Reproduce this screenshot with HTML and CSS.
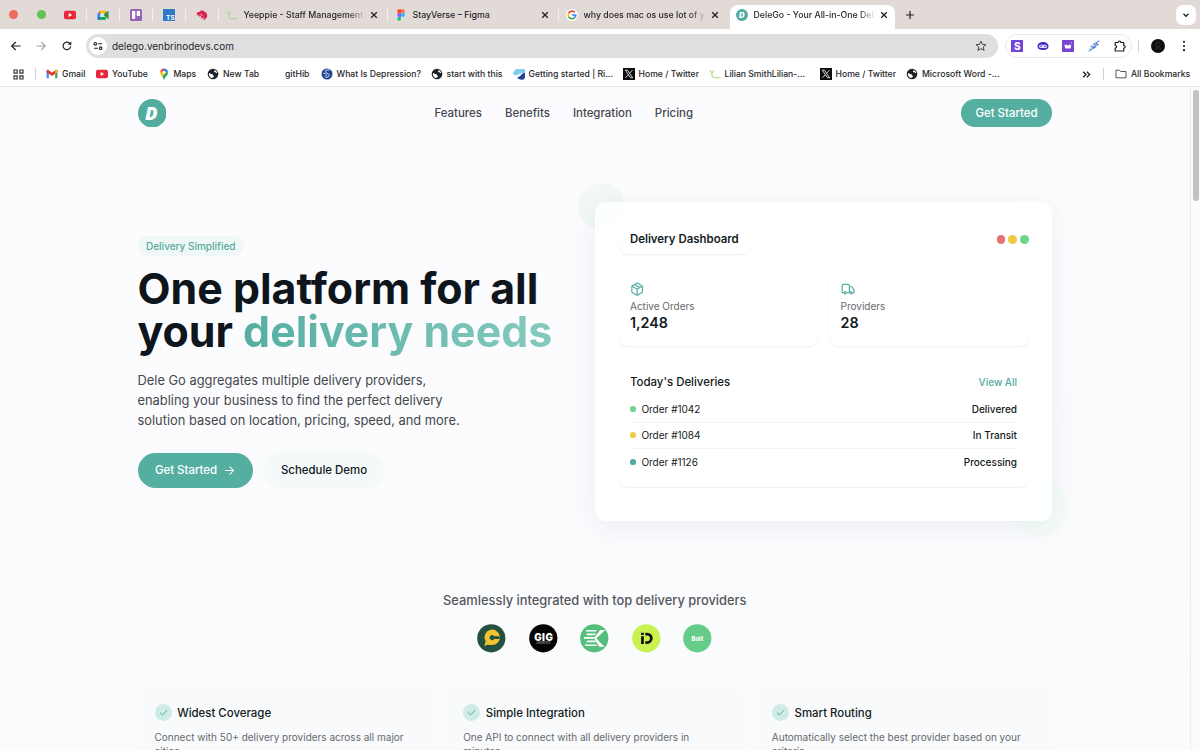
FILE: index.html
```
<!DOCTYPE html>
<html lang="en">
<head>
    <meta charset="UTF-8">
    <meta name="viewport" content="width=device-width, initial-scale=1.0">
    <title>DeleGo - Your All-in-One Delivery Platform</title>
    <link rel="stylesheet" href="styles.css">
</head>
<body>
    <!-- shared icons -->
    <svg class="defs" width="0" height="0">
        <symbol id="close" viewBox="0 0 8 8"><path d="M1.200 1.200l5.600 5.600M6.800 1.200L1.200 6.800" stroke="#222" stroke-width="1.300" fill="none"/></symbol>
        <symbol id="youtube" viewBox="0 0 12 12"><rect y="1.700" width="12" height="8.600" rx="2" fill="#e8283a"/><path d="M4.700 4v4l3.500-2z" fill="#fff"/></symbol>
        <symbol id="globe" viewBox="0 0 12 12"><circle cx="6" cy="6" r="5.300" fill="#202124"/><path d="M1.800 5.200c1.500-.3 2 .9 3.400 1 .9.1.6 1.200 1.500 1.500.6.3.3 1.300-.5 1.500-.6.2-.8.900-1.200.900C3 9.600 1.700 7.800 1.800 5.200zM6 2c.6 0 1.500-.2 1.700.2.300.6-1 .8-.7 1.500.3.600 1.500.2 1.800 1 .2.600 1 .4 1.400.3-.1-1.800-2-3.600-4.200-3z" fill="#fff"/></symbol>
        <symbol id="x-logo" viewBox="0 0 12 12"><rect width="12" height="12" fill="#0c0c0c"/><path d="M2.300 2.200h2.200l5.200 7.600H7.500z" fill="none" stroke="#fff" stroke-width=".8"/><path d="M9.400 2.200L6.500 5.400M5.300 6.700L2.500 9.800" stroke="#fff" stroke-width=".8"/></symbol>
        <symbol id="sprout" viewBox="0 0 12 12"><path d="M1 2l1.500 2.800M5 2.500L3 5.200c-.3 2 .3 4 2 4.600h6.500" stroke="#a5d98a" stroke-width="1.100" fill="none"/></symbol>
        <symbol id="check" viewBox="0 0 17 17"><circle cx="8.500" cy="8.500" r="8.500" fill="#cfebe5"/><path d="M5.200 8.700l2.300 2.200 4.300-4.500" stroke="#52ad9f" stroke-width="1" fill="none" stroke-linecap="round" stroke-linejoin="round"/></symbol>
    </svg>

    <div class="browser">
        <div class="tabs">
            <div class="lights"><i class="red"></i><i class="green"></i></div>
            <div class="pinned"><svg class="ico" viewBox="0 0 12 12"><use href="#youtube"/></svg></div>
            <div class="pinned"><svg class="ico" viewBox="0 0 12 12"><path d="M.5 4.500L3.500 1.500V4.500z" fill="#e94235"/><path d="M3.500 1.500h5.300v3H3.500z" fill="#fbbc04"/><path d="M.5 4.500h3v4h-3z" fill="#2684fc"/><path d="M.5 8.300h3v2.500H1.500a1 1 0 0 1-1-1z" fill="#0066da"/><path d="M3.500 8h5.300v2.800H3.500z" fill="#00ac47"/><path d="M3.500 4.500h3.300v3.500H3.500z" fill="#dfe8f5"/><path d="M6.500 6l2.300-2.500 2.700-1.800v8.600L8.800 8z" fill="#2d8f46"/></svg></div>
            <div class="pinned"><svg class="ico" viewBox="0 0 12 12"><rect width="12" height="12" rx="1.500" fill="#9564b5"/><rect x="2" y="2" width="3.200" height="7.800" fill="#fff"/><rect x="6.800" y="2" width="3.200" height="5" fill="#fff"/></svg></div>
            <div class="pinned"><svg class="ico" viewBox="0 0 12 12"><rect width="12" height="12" rx=".5" fill="#3178c6"/><text x="3.100" y="10.500" class="ts">TS</text></svg></div>
            <div class="pinned"><svg class="ico" viewBox="0 0 12 12"><path d="M5.200 1.200l1 .9 1.100-1 .4 1.100c2.300.5 3.800 2.500 3.500 4.900-.3 2.400-2.200 3.900-4.900 4 1.400-.7 2-1.700 1.700-2.900-.9 1.200-2.200 1.500-3.300 1l1.200-1c-.7-.1-1.200-.5-1.300-1.200L3.200 7.800 3 6.400 1 6.200.8 4.500C.9 3.200 2.500 2.900 3.500 3z" fill="#d9234b"/><path d="M3.800 5.800c1.200-.6 2.600 0 3.200 1.400" stroke="#e2dad7" stroke-width=".8" fill="none"/></svg></div>
            <div class="tab tab-yeeppie"><svg class="ico"><use href="#sprout"/></svg><span class="tab-title fade">Yeeppie - Staff Management</span><svg class="close"><use href="#close"/></svg></div>
            <div class="tab tab-figma"><svg class="ico" viewBox="0 0 12 12"><path d="M4 .3h2v3.800H4a1.900 1.900 0 0 1 0-3.800z" fill="#f24e1e"/><path d="M6 .3h2a1.900 1.900 0 0 1 0 3.800H6z" fill="#ff7262"/><path d="M4 4.100h2v3.800H4a1.900 1.900 0 0 1 0-3.800z" fill="#a259ff"/><circle cx="8" cy="6" r="1.900" fill="#1abcfe"/><path d="M4 7.900h2v1.900a1.900 1.900 0 1 1-2-1.900z" fill="#0acf83"/></svg><span class="tab-title">StayVerse – Figma</span><svg class="close"><use href="#close"/></svg></div>
            <div class="tab tab-google"><svg class="ico" viewBox="0 0 12 12"><circle cx="6" cy="6" r="6" fill="#fff"/><g fill="none" stroke-width="1.700"><path d="M2.700 4.100A3.800 3.800 0 0 1 8.900 3.400" stroke="#ea4335"/><path d="M2.700 4.100a3.800 3.800 0 0 0 0 3.800" stroke="#fbbc05"/><path d="M2.700 7.900a3.800 3.800 0 0 0 5.900.7" stroke="#34a853"/><path d="M8.600 8.600A3.700 3.700 0 0 0 9.800 6H6" stroke="#4285f4"/></g></svg><span class="tab-title fade">why does mac os use lot of yo</span><svg class="close"><use href="#close"/></svg></div>
            <div class="tab active"><svg class="ico" viewBox="0 0 12 12"><circle cx="6" cy="6" r="6" fill="#52ad9f"/><text x="3.100" y="8.700" class="mini-d">D</text></svg><span class="tab-title fade">DeleGo - Your All-in-One Deli</span><svg class="close"><use href="#close"/></svg></div>
            <svg class="plus" viewBox="0 0 10 10"><path d="M5 1v8M1 5h8" stroke="#222" stroke-width="1.200"/></svg>
            <div class="tab-search"><svg width="8" height="8" viewBox="0 0 8 8"><path d="M1.500 2.800L4 5.300l2.500-2.500" stroke="#222" stroke-width="1.300" fill="none"/></svg></div>
        </div>

        <div class="toolbar">
            <svg class="nav-ico" viewBox="0 0 12 12"><path d="M10.500 6H2M5.700 2L1.700 6l4 4" stroke="#222" stroke-width="1.200" fill="none"/></svg>
            <svg class="nav-ico" viewBox="0 0 12 12"><path d="M1.500 6H10M6.300 2l4 4-4 4" stroke="#a3a3a3" stroke-width="1.100" fill="none"/></svg>
            <svg class="nav-ico" viewBox="0 0 12 12"><path d="M9.700 6.300A3.800 3.800 0 1 1 8.600 3.200L9.800 4.400" stroke="#222" stroke-width="1.200" fill="none"/><path d="M10.300 1.600v3.200H7.100z" fill="#222"/></svg>
            <div class="omnibox">
                <div class="site-info"><svg width="10" height="10" viewBox="0 0 10 10" fill="none" stroke="#222" stroke-width="1.100"><circle cx="2.300" cy="2.800" r="1.300"/><path d="M5 2.800h4M1 7.200h4"/><circle cx="7.700" cy="7.200" r="1.300"/></svg></div>
                <span class="url">delego.venbrinodevs.com</span>
                <svg class="star" viewBox="0 0 12 12"><path d="M6 1.200l1.400 3.200 3.500.3-2.650 2.300.8 3.400L6 8.600 2.950 10.400l.8-3.400L1.100 4.700l3.500-.3z" stroke="#444" fill="none"/></svg>
            </div>
            <div class="extensions">
                <svg viewBox="0 0 12 12"><rect width="12" height="12" rx=".5" fill="#7345d6"/><text x="3" y="9.800" class="ext-s">S</text></svg>
                <svg viewBox="0 0 12 12"><path d="M.5 6.500C.5 3.600 3 2 6 2s5.500 1.600 5.500 4.500C11.500 9 9 10 6 10S.5 9 .5 6.500z" fill="#4a2ac0"/><rect x="2" y="4.800" width="8" height="3.300" rx="1.600" fill="#e2dcff"/><circle cx="4" cy="6.300" r=".8" fill="#4a2ac0"/><circle cx="8" cy="6.300" r=".8" fill="#4a2ac0"/></svg>
                <svg viewBox="0 0 12 12"><rect width="12" height="12" rx=".5" fill="#7a43d1"/><path d="M2.300 4.200l1 4.300h5.200l1-4.300L8 5.500 7.300 4.200 6 6 4.700 4.200 4 5.500z" fill="#fff"/><path d="M9 2.200l.8 1" stroke="#fff" stroke-width=".8"/></svg>
                <svg viewBox="0 0 12 12"><path d="M11.200.8L6.500 4.300h4L4.500 7.200H7L.8 11.200" stroke="#3c6fc9" stroke-width="1.100" fill="none" stroke-dasharray="2 .5"/><path d="M7.500 2.500L2.500 6.500h3L1 9" stroke="#5a8be0" stroke-width=".8" fill="none" stroke-dasharray="1.500 .6"/></svg>
                <svg viewBox="0 0 12 12"><path d="M1.200 2.500h3c0-2 2.600-2 2.600 0h2.900v3c2 0 2 2.500 0 2.500v3H1.200V8c1.900 0 1.900-2.500 0-2.500z" stroke="#222" stroke-width="1.200" fill="none" stroke-linejoin="round"/></svg>
            </div>
            <i class="divider"></i>
            <svg class="avatar" viewBox="0 0 14 14"><circle cx="7" cy="7" r="7" fill="#0e0e10"/><path d="M5 4.500c.5-2 3.500-2 4 0v2C8.500 8 5.500 8 5 6.500zM4 10c1-1.500 5-1.500 6 0" fill="none" stroke="#46464b" stroke-width=".8" stroke-dasharray="1 .6"/></svg>
            <svg class="menu" viewBox="0 0 4 12"><g fill="#222"><circle cx="2" cy="1.800" r="1.100"/><circle cx="2" cy="6" r="1.100"/><circle cx="2" cy="10.200" r="1.100"/></g></svg>
        </div>

        <div class="bookmarks">
            <svg class="apps" viewBox="0 0 12 12" fill="none" stroke="#333" stroke-width="1.300"><path d="M1.100 1.100h3.400v3.400H1.100zM7.500 1.100h3.400v3.400H7.500zM1.100 7.500h3.400v3.400H1.100zM7.500 7.500h3.400v3.400H7.500z"/></svg>
            <i class="divider"></i>
            <div class="bookmark-list">
                <div class="bookmark"><svg viewBox="0 0 12 12"><path d="M.6 2.500h2.200v7.700H1.300a.7.700 0 0 1-.7-.7z" fill="#4285f4"/><path d="M9.200 2.500h2.200v7a.7.700 0 0 1-.7.700H9.200z" fill="#34a853"/><path d="M.6 3c0-1.200 1.300-1.500 2.200-.8L6 4.700l3.200-2.500c.9-.7 2.200-.4 2.200.8v1.200L6 8 .6 4.200z" fill="#e03c31"/><path d="M9.200 2.200c.9-.7 2.200-.4 2.200.8v1.200L9.200 5.800z" fill="#fbbc04"/></svg>Gmail</div>
                <div class="bookmark"><svg><use href="#youtube"/></svg>YouTube</div>
                <div class="bookmark"><svg viewBox="0 0 12 12"><path d="M2.200 4.500A3.900 3.900 0 0 1 6 .4v4z" fill="#ea4335"/><path d="M6 .4a4 4 0 0 1 4 4H6z" fill="#4285f4"/><path d="M10 4.400C10 7.400 7.400 8 6 12L4.300 8.200 8.300 4z" fill="#34a853"/><path d="M2.200 4.500c0 1.500 1 2.500 2.100 3.900L6.500 5 4 3z" fill="#fbbc04"/><circle cx="6" cy="4.400" r="1.400" fill="#fff"/></svg>Maps</div>
                <div class="bookmark"><svg><use href="#globe"/></svg>New Tab</div>
                <div class="bookmark"><svg></svg>gitHib</div>
                <div class="bookmark"><svg viewBox="0 0 12 12"><circle cx="6" cy="6" r="5.500" fill="#20418f"/><path d="M8.500 2.200C5 1.300 3.500 3 5 4.500s4 1.500 3.200 3.300S5 9.500 3.500 8.700M2 5.500c2-1 4 1 3 2.500" stroke="#dbe6fb" fill="none"/></svg>What Is Depression?</div>
                <div class="bookmark"><svg><use href="#globe"/></svg>start with this</div>
                <div class="bookmark"><svg viewBox="0 0 12 12"><path d="M3 1h9v3.500C7 4.500 5.500 7.500 2.500 7.500.8 7.500 0 6 .3 4.500z" fill="#7fcdf0"/><path d="M12 4.500V9a3 3 0 0 1-3 2.700C6.500 11.700 5 10.700 4 9.300 7.500 9.500 7.500 5.800 12 4.500z" fill="#26409a"/></svg>Getting started | Ri...</div>
                <div class="bookmark"><svg><use href="#x-logo"/></svg>Home / Twitter</div>
                <div class="bookmark"><svg><use href="#sprout"/></svg>Lilian SmithLilian-...</div>
                <div class="bookmark"><svg><use href="#x-logo"/></svg>Home / Twitter</div>
                <div class="bookmark"><svg><use href="#globe"/></svg>Microsoft Word -...</div>
            </div>
            <svg class="more" viewBox="0 0 8 8"><path d="M1 1.500L3.500 4 1 6.500M4.300 1.500L6.800 4 4.300 6.500" fill="none" stroke="#222" stroke-width="1.200"/></svg>
            <i class="divider"></i>
            <div class="bookmark all"><svg viewBox="0 0 12 12"><path d="M1 2.200h3.500l1.200 1.300H11v6.300H1z" fill="none" stroke="#555" stroke-linejoin="round"/></svg>All Bookmarks</div>
        </div>
    </div>

    <div class="viewport">
        <main class="page">
            <header class="header">
                <div class="header-side"><svg class="logo" viewBox="0 0 28 28"><circle cx="14" cy="14" r="14" fill="#52ad9f"/><text x="6.900" y="20.200" class="logo-d">D</text><circle cx="17.600" cy="21" r=".9" fill="#a08478"/></svg></div>
                <nav class="nav">
                    <a>Features</a>
                    <a>Benefits</a>
                    <a>Integration</a>
                    <a>Pricing</a>
                </nav>
                <div class="header-side"><a class="btn btn-header">Get Started</a></div>
            </header>

            <section class="hero">
                <div class="hero-text">
                    <span class="badge">Delivery Simplified</span>
                    <h1>One platform for all<br>your <span class="gradient">delivery needs</span></h1>
                    <p>Dele Go aggregates multiple delivery providers,<br>enabling your business to find the perfect delivery<br>solution based on location, pricing, speed, and more.</p>
                    <div class="actions">
                        <a class="btn btn-main">Get Started <svg width="11" height="11" viewBox="0 0 24 24" fill="none" stroke="#fff" stroke-width="2.200" stroke-linecap="round" stroke-linejoin="round"><path d="M3 12h18M13 4l8 8-8 8"/></svg></a>
                        <a class="btn btn-light">Schedule Demo</a>
                    </div>
                </div>
                <div class="dashboard-wrap">
                    <i class="blob blob-top"></i>
                    <i class="blob blob-bottom"></i>
                    <div class="dashboard">
                        <div class="dash-head">
                            <div class="dash-title">Delivery Dashboard</div>
                            <div class="dots"><i class="dot-red"></i><i class="dot-yellow"></i><i class="dot-green"></i></div>
                        </div>
                        <div class="stats">
                            <div class="stat">
                                <svg viewBox="0 0 24 24"><path d="M11 21.730a2 2 0 0 0 2 0l7-4A2 2 0 0 0 21 16V8a2 2 0 0 0-1-1.730l-7-4a2 2 0 0 0-2 0l-7 4A2 2 0 0 0 3 8v8a2 2 0 0 0 1 1.730zM12 22V12M3.300 7l8.700 5 8.700-5M7.500 4.270l9 5.150"/></svg>
                                <span>Active Orders</span>
                                <b>1,248</b>
                            </div>
                            <div class="stat">
                                <svg viewBox="0 0 24 24"><path d="M14 18V6a2 2 0 0 0-2-2H4a2 2 0 0 0-2 2v11a1 1 0 0 0 1 1h2M15 18H9M19 18h2a1 1 0 0 0 1-1v-3.650a1 1 0 0 0-.22-.62l-3.480-4.350A1 1 0 0 0 17.520 8H14"/><circle cx="17" cy="18" r="2"/><circle cx="7" cy="18" r="2"/></svg>
                                <span>Providers</span>
                                <b>28</b>
                            </div>
                        </div>
                        <div class="deliveries">
                            <div class="deliveries-head"><b>Today's Deliveries</b><a>View All</a></div>
                            <div class="order"><i class="dot-green"></i>Order #1042<strong>Delivered</strong></div>
                            <div class="order"><i class="dot-yellow"></i>Order #1084<strong>In Transit</strong></div>
                            <div class="order"><i class="dot-teal"></i>Order #1126<strong>Processing</strong></div>
                        </div>
                    </div>
                </div>
            </section>

            <section class="providers">
                <p>Seamlessly integrated with top delivery providers</p>
                <div class="provider-logos">
                    <svg viewBox="0 0 29 29"><circle cx="14.500" cy="14.500" r="14.300" fill="#23503f"/><path d="M7.500 22.500l1.200-5A7.800 7.800 0 1 1 15 21.300C12.500 21.300 11 20.700 10 21.300z" fill="#f2c230"/><path d="M22.800 12.500h-5.500a2.400 2.400 0 1 0 0 2.600h5.500z" fill="#23503f"/></svg>
                    <svg viewBox="0 0 29 29"><circle cx="14.500" cy="14.500" r="14.300" fill="#050505"/><text x="5.200" y="17" class="gig" textLength="19">GIG</text><text x="7.500" y="20.200" class="logistics" textLength="14">LOGISTICS</text></svg>
                    <svg viewBox="0 0 29 29"><circle cx="14.500" cy="14.500" r="14.300" fill="#54be7b"/><g fill="#fff"><path d="M7 6h10l-.8 1.600H5.500zM6.500 9.700h9.700l-.8 1.700H7zM4 13.200h11.500l-.8 1.700H4zM7.500 16.800h8l.6 1.600H6zM4.500 20.700h12l.6 1.700H6z"/><path d="M25.500 6L20 11.400l-3.500 3 3.700 4.100 4.800 4.500h-5.500L15 15.800v-2.300L20.500 6z"/></g></svg>
                    <svg viewBox="0 0 29 29"><circle cx="14.500" cy="14.500" r="14.300" fill="#c9f251"/><path d="M9.200 8.800h2.800v2.400H9.200zM9.200 12.500h2.800v7.700H9.200zM13.500 8.800h1.800A5.700 5.700 0 0 1 15.300 20.200h-1.800v-2.800h1.800a2.900 2.900 0 0 0 0-5.800h-1.800z" fill="#111"/></svg>
                    <svg viewBox="0 0 29 29"><circle cx="14.500" cy="14.500" r="14.300" fill="#66cc89"/><text x="8.500" y="17.100" class="bolt" textLength="12">Bolt</text></svg>
                </div>
            </section>

            <section class="features">
                <div class="feature">
                    <h3><svg><use href="#check"/></svg>Widest Coverage</h3>
                    <p>Connect with 50+ delivery providers across all major cities</p>
                </div>
                <div class="feature">
                    <h3><svg><use href="#check"/></svg>Simple Integration</h3>
                    <p>One API to connect with all delivery providers in minutes</p>
                </div>
                <div class="feature">
                    <h3><svg><use href="#check"/></svg>Smart Routing</h3>
                    <p>Automatically select the best provider based on your criteria</p>
                </div>
            </section>
        </main>
        <div class="scrollbar"><i></i></div>
    </div>
</body>
</html>
```
FILE: styles.css
```
* { box-sizing: border-box; }
body { margin: 0; height: 750px; overflow: hidden; font-family: Inter, "Liberation Sans", sans-serif; color: #131a22; background: #fff; }
svg { flex: none; display: block; }
i { display: block; flex: none; }
.defs { position: absolute; }

/* browser window */
.browser { height: 87px; background: #fff; border-bottom: 1px solid #e3e3e4; color: #26262a; }
.tabs { height: 29px; background: #e2dad7; display: flex; align-items: center; }
.lights { width: 54px; display: flex; gap: 19px; padding-left: 9px; }
.lights i { width: 9px; height: 9px; border-radius: 50%; }
.lights .red { background: #ec6a5e; }
.lights .green { background: #5ec351; }
.ico { width: 12px; height: 12px; }
.pinned { width: 33px; display: flex; justify-content: center; border-right: 1.5px solid #f6f2f0; height: 12px; }
.tab { display: flex; align-items: center; height: 12px; font-size: 8.75px; font-weight: 500; padding: 0 9px 0 7px; gap: 5.5px; border-right: 1.5px solid #f6f2f0; }
.tab-yeeppie { width: 169px; }
.tab-figma { width: 171px; }
.tab-google { width: 171px; border-right: 0; padding-right: 11px; }
.tab-title { flex: 1; min-width: 0; white-space: nowrap; line-height: 14px; }
.fade { -webkit-mask-image: linear-gradient(90deg, #000 87%, transparent 100%); mask-image: linear-gradient(90deg, #000 87%, transparent 100%); }
.close { width: 8px; height: 8px; }
.tab.active { width: 165px; height: 24px; margin-top: 5px; background: #fff; border-radius: 8px 8px 0 0; border: 0; padding: 0 7px 5px 6px; }
.plus { width: 10px; height: 10px; margin-left: 10px; }
.tab-search { margin: 0 4px 0 auto; width: 20px; height: 20px; border-radius: 7px; background: #fff; display: flex; align-items: center; justify-content: center; }
.toolbar { height: 34px; display: flex; align-items: center; padding: 0 14px 0 10px; }
.nav-ico { width: 12px; height: 12px; margin-right: 13.3px; }
.omnibox { width: 912px; height: 24px; border-radius: 12px; background: #dfdfe0; display: flex; align-items: center; padding: 0 11px 0 3px; }
.site-info { width: 18px; height: 18px; border-radius: 50%; background: #fff; display: flex; align-items: center; justify-content: center; }
.url { flex: 1; margin-left: 5px; font-size: 9.95px; }
.star { width: 12px; height: 12px; }
.extensions { width: 127px; height: 24px; margin-left: 7px; border: 1px solid #e9e9ea; border-radius: 12px; display: flex; align-items: center; justify-content: space-between; padding: 0 5px; }
.extensions svg { width: 12px; height: 12px; }
.divider { width: 1px; height: 12px; background: #d6d2d3; }
.toolbar .divider { margin-left: 6.5px; }
.avatar { width: 14px; height: 14px; margin-left: 12px; }
.menu { width: 4px; height: 12px; margin-left: auto; }
.bookmarks { height: 22px; display: flex; align-items: center; padding-left: 13px; }
.apps { width: 11px; height: 11px; margin-right: 11px; }
.bookmark-list { width: 1040px; margin-left: 10px; display: grid; grid-template-columns: 50px 61.5px 49.5px 62px 51.5px 110px 82px 110px 86px 111px 86.5px 179.5px; }
.bookmark { display: flex; align-items: center; gap: 4px; font-size: 8.65px; font-weight: 500; white-space: nowrap; line-height: 14px; }
.bookmark svg { width: 12px; height: 12px; }
.more { width: 9px; height: 9px; margin: 0 12px 0 -4px; }
.all { margin-left: 11px; }
.ts { font: 700 6.5px Inter, sans-serif; fill: #fff; }
.mini-d { font: italic 900 7.5px Inter, sans-serif; fill: #fff; }
.ext-s { font: 800 10px Inter, sans-serif; fill: #fff; }

/* page */
.viewport { display: flex; height: 663px; }
.page { width: 1190px; height: 663px; overflow: hidden; padding: 11.5px 138px 0 137.5px; background: linear-gradient(180deg, #fcfcfe, #fafbfd); }
.scrollbar { width: 10px; border-left: 1px solid #ececec; background: #fbfbfb; padding: 3px 1px; }
.scrollbar i { width: 6px; height: 111px; border-radius: 3px; background: #c2c2c2; margin-left: 1px; }
.header { display: flex; align-items: center; justify-content: space-between; height: 28.5px; }
.header-side { width: 91px; }
.logo { width: 28.5px; height: 28.5px; }
.logo-d { font: italic 900 18px "Noto Sans", Inter, sans-serif; fill: #fff; }
.nav { display: flex; gap: 23px; font-size: 11.43px; font-weight: 500; color: #44484e; margin-right: 62px; }
.btn { display: flex; align-items: center; justify-content: center; border-radius: 20px; font-size: 11.43px; font-weight: 500; background: #54afa1; color: #fff; }
.btn-header { width: 91px; height: 28.5px; }
.hero { display: grid; grid-template-columns: 1fr 457px; align-items: center; margin-top: 74.5px; }
.hero-text { padding-top: 2px; }
.badge { display: block; width: fit-content; height: 20px; line-height: 20px; padding: 0 8.5px; border-radius: 10px; background: #f0f8f7; color: #54ab9d; font-size: 10px; font-weight: 500; }
h1 { margin: 11px 0 18px; font-size: 42.86px; line-height: 42.86px; font-weight: 700; color: #0e151c; white-space: nowrap; }
.gradient { background: linear-gradient(90deg, #54afa1, #86c9be); -webkit-background-clip: text; background-clip: text; color: transparent; }
.hero-text p { margin: 0; font-size: 12.86px; line-height: 20px; color: #45484c; white-space: nowrap; }
.actions { display: flex; gap: 11.5px; margin-top: 22px; }
.btn-main { width: 115px; height: 34.3px; gap: 7px; }
.btn-light { width: 120px; height: 34.3px; background: #f4f9fa; color: #12181f; }
.dashboard-wrap { position: relative; }
.blob { position: absolute; border-radius: 50%; }
.blob-top { width: 46px; height: 46px; left: -17px; top: -19px; background: #f1f8f7; }
.blob-bottom { width: 57px; height: 57px; right: -16px; bottom: -16px; background: #f5fbfa; }
.dashboard { position: relative; height: 319px; padding: 23.5px 23.5px 0; border-radius: 11.5px; background: rgba(255, 255, 255, 0.85); box-shadow: 0 6px 26px rgba(30, 50, 80, 0.07); }
.dash-head { display: flex; align-items: center; justify-content: space-between; }
.dash-title { height: 28.5px; line-height: 28.5px; padding: 0 11.4px; border-radius: 8.5px; font-size: 11.43px; font-weight: 600; background: #fff; box-shadow: 0 1px 2px rgba(0, 0, 0, 0.07); }
.dots { display: flex; gap: 3px; }
.dots i { width: 8.6px; height: 8.6px; border-radius: 50%; }
.dots .dot-red { background: #e57373; }
.dot-yellow { background: #edcb46; }
.dot-green { background: #6dd68a; }
.dot-teal { background: #54ab9d; }
.stats { display: grid; grid-template-columns: 1fr 1fr; gap: 11px; margin-top: 17px; }
.stat { height: 75px; padding: 11.5px; border-radius: 8.5px; background: #fff; box-shadow: 0 1px 2px rgba(0, 0, 0, 0.07); }
.stat svg { width: 14.3px; height: 14.3px; fill: none; stroke: #54afa1; stroke-width: 2; stroke-linecap: round; stroke-linejoin: round; }
.stat span { display: block; margin-top: 3px; font-size: 10px; line-height: 14px; color: #66696d; }
.stat b { display: block; font-size: 14.3px; line-height: 20.5px; font-weight: 600; }
.deliveries { height: 124px; margin-top: 17px; padding: 11.5px; border-radius: 8.5px; background: #fff; box-shadow: 0 1px 2px rgba(0, 0, 0, 0.07); }
.deliveries-head { display: flex; justify-content: space-between; align-items: center; height: 16px; font-size: 11.43px; margin-bottom: 6px; }
.deliveries-head b { font-weight: 500; }
.deliveries-head a { color: #54ab9d; font-size: 10px; font-weight: 500; }
.order { display: flex; align-items: center; height: 26.5px; font-size: 10px; border-bottom: 1px solid #f2f3f3; }
.order:last-child { border-bottom: 0; }
.order i { width: 5.7px; height: 5.7px; border-radius: 50%; margin-right: 5.7px; }
.order strong { margin-left: auto; font-weight: 500; }
.providers { margin-top: 70px; text-align: center; }
.providers p { margin: 0; font-size: 12.86px; line-height: 20px; font-weight: 500; color: #55585c; }
.provider-logos { display: flex; justify-content: center; gap: 22.9px; margin-top: 13.5px; }
.provider-logos svg { width: 28.6px; height: 28.6px; }
.gig { font: 900 10px Inter, sans-serif; fill: #fff; }
.logistics { font: 500 2.8px Inter, sans-serif; fill: #bbb; }
.bolt { font: 800 6px Inter, sans-serif; fill: #fff; }
.features { display: grid; grid-template-columns: repeat(3, 1fr); gap: 11.5px; margin-top: 33.5px; }
.feature { height: 110px; padding: 18px 17px; border-radius: 8.5px; background: #f9fafb; }
.feature h3 { display: flex; align-items: center; gap: 5.7px; margin: 0; height: 17px; font-size: 11.43px; font-weight: 500; }
.feature h3 svg { width: 17px; height: 17px; }
.feature p { margin: 9px 0 0; font-size: 10px; line-height: 14.3px; color: #66696d; }
```
